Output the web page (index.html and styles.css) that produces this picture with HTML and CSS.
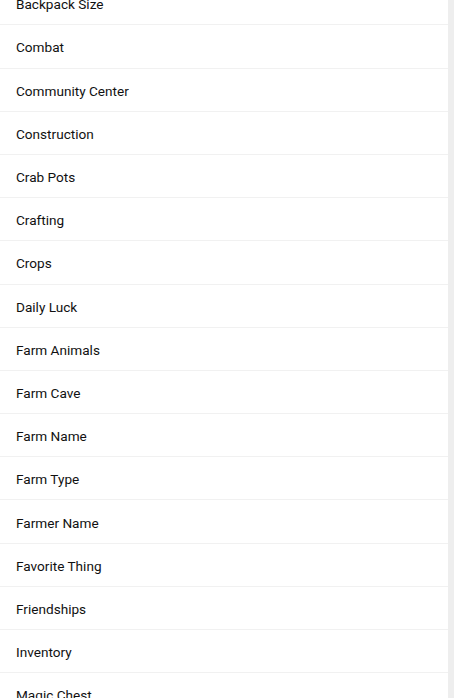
FILE: index.html
```html
<!DOCTYPE html>
<html>
<head>
<meta charset="utf-8">
<link rel="stylesheet" href="styles.css">
</head>
<body>
<div class="screen">
  <ul class="list">
    <li class="row">Backpack Size</li>
    <li class="row">Combat</li>
    <li class="row">Community Center</li>
    <li class="row">Construction</li>
    <li class="row">Crab Pots</li>
    <li class="row">Crafting</li>
    <li class="row">Crops</li>
    <li class="row">Daily Luck</li>
    <li class="row">Farm Animals</li>
    <li class="row">Farm Cave</li>
    <li class="row">Farm Name</li>
    <li class="row">Farm Type</li>
    <li class="row">Farmer Name</li>
    <li class="row">Favorite Thing</li>
    <li class="row">Friendships</li>
    <li class="row">Inventory</li>
    <li class="row">Magic Chest</li>
  </ul>
  <div class="scrollbar"></div>
</div>
</body>
</html>
```
FILE: styles.css
```css
html, body {
  margin: 0;
  padding: 0;
  background: #ffffff;
  overflow: hidden;
}
.screen {
  display: flex;
  width: 454px;
  height: 698px;
  overflow: hidden;
}
.list {
  flex: 1;
  list-style: none;
  margin: -17.8px 0 0 0;
  padding: 0;
}
.row {
  box-sizing: border-box;
  height: 43.2px;
  padding-top: 2px;
  border-bottom: 1px solid #f1f1f1;
  display: flex;
  align-items: center;
  padding-left: 16px;
  font-family: Roboto, "Liberation Sans", sans-serif;
  font-size: 13.6px;
  color: #111111;
}
.scrollbar {
  width: 6px;
  flex: none;
  background: #eeeeee;
}
```
